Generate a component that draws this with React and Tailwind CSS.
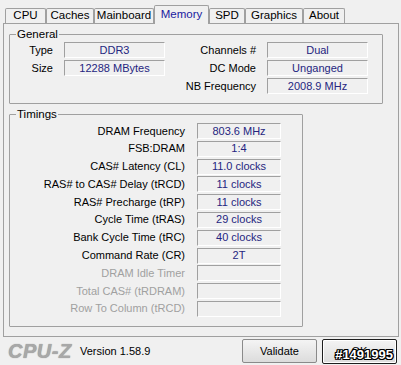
import React from "react";

const tabs = [
  { name: "CPU", w: "w-[41px]" },
  { name: "Caches", w: "w-[48px]" },
  { name: "Mainboard", w: "w-[60px]" },
  { name: "Memory", w: "w-[55px]", active: true },
  { name: "SPD", w: "w-[36px]" },
  { name: "Graphics", w: "w-[58px]" },
  { name: "About", w: "w-[42px]" },
];

const timings = [
  { label: "DRAM Frequency", value: "803.6 MHz" },
  { label: "FSB:DRAM", value: "1:4" },
  { label: "CAS# Latency (CL)", value: "11.0 clocks" },
  { label: "RAS# to CAS# Delay (tRCD)", value: "11 clocks" },
  { label: "RAS# Precharge (tRP)", value: "11 clocks" },
  { label: "Cycle Time (tRAS)", value: "29 clocks" },
  { label: "Bank Cycle Time (tRC)", value: "40 clocks" },
  { label: "Command Rate (CR)", value: "2T" },
  { label: "DRAM Idle Timer", value: "", disabled: true },
  { label: "Total CAS# (tRDRAM)", value: "", disabled: true },
  { label: "Row To Column (tRCD)", value: "", disabled: true },
];

// sunken read-only box like the win32 edit controls
const Field = ({ value, width, height = "h-[16px]" }) => (
  <div
    className={`${width} ${height} flex items-center justify-center border border-t-[#a0a0a0] border-l-[#a0a0a0] border-b-white border-r-white bg-[#f0f0f0] text-[#25257f] leading-none`}
  >
    {value}
  </div>
);

const Row = ({ label, value, labelW, fieldW }) => (
  <div className="flex items-center">
    <div className={`${labelW} text-right text-black leading-none`}>{label}</div>
    <div className="ml-[11px]">
      <Field value={value} width={fieldW} />
    </div>
  </div>
);

export default function App() {
  return (
    <div className="w-[401px] h-[365px] bg-[#f0f0f0] overflow-hidden font-['Liberation_Sans',Arial,sans-serif] text-[11px] text-black">
      {/* Tabs */}
      <div className="flex items-end h-[23px] pl-[5px]">
        {tabs.map((t) =>
          t.active ? (
            <div
              key={t.name}
              className={`${t.w} h-[19px] -mb-[1px] relative z-10 flex items-center justify-center bg-[#f0f0f0] border border-b-0 border-[#a0a0a0] rounded-t-[2px] text-[#1a1aa0] text-[11.5px]`}
            >
              {t.name}
            </div>
          ) : (
            <div
              key={t.name}
              className={`${t.w} h-[15px] flex items-center justify-center border border-b-0 border-[#a0a0a0] rounded-t-[2px] bg-[#f0f0f0] text-[11.5px]`}
            >
              {t.name}
            </div>
          )
        )}
      </div>

      {/* Tab panel */}
      <div className="ml-[3px] w-[396px] h-[314px] border border-[#a0a0a0]">
        {/* General */}
        <fieldset className="ml-[5px] mt-[4px] w-[374px] h-[76px] border border-[#a0a0a0] rounded-[1px]">
          <legend className="ml-[6px] px-[1px] leading-[13px] text-[11.5px]">General</legend>
          <div className="flex pt-[1px]">
            <div className="flex flex-col gap-[2px] w-[155px]">
              <Row label="Type" value="DDR3" labelW="w-[43px]" fieldW="w-[101px]" />
              <Row label="Size" value="12288 MBytes" labelW="w-[43px]" fieldW="w-[101px]" />
            </div>
            <div className="flex flex-col gap-[2px]">
              <Row label="Channels #" value="Dual" labelW="w-[91px]" fieldW="w-[101px]" />
              <Row label="DC Mode" value="Unganged" labelW="w-[91px]" fieldW="w-[101px]" />
              <Row label="NB Frequency" value="2008.9 MHz" labelW="w-[91px]" fieldW="w-[101px]" />
            </div>
          </div>
        </fieldset>

        {/* Timings */}
        <fieldset className="ml-[5px] mt-[4px] w-[294px] h-[219px] border border-[#a0a0a0] rounded-[1px]">
          <legend className="ml-[6px] px-[1px] leading-[13px] text-[11.5px]">Timings</legend>
          <div className="flex flex-col gap-[1.8px] pt-[2px]">
            {timings.map((t) => (
              <div key={t.label} className="flex items-center">
                <div
                  className={`w-[175px] text-right leading-none ${
                    t.disabled ? "text-[#a0a0a0]" : "text-black"
                  }`}
                >
                  {t.label}
                </div>
                <div className="ml-[12px]">
                  <Field value={t.value} width="w-[84px]" />
                </div>
              </div>
            ))}
          </div>
        </fieldset>
      </div>

      {/* Footer */}
      <div className="flex items-center h-[28px] pl-[8px]">
        <span className="w-[64px] text-[20px] font-bold italic text-[#a8a8a8] tracking-[0.5px] leading-none [text-shadow:0_0_1px_#8a8a8a]">
          CPU-Z
        </span>
        <span className="ml-[8px] text-[11px]">Version 1.58.9</span>
        <div className="ml-auto mr-[4px] flex gap-[5px] items-center">
          <button className="w-[75px] h-[24px] border border-[#8a8a8a] rounded-[2px] bg-gradient-to-b from-[#f4f4f4] to-[#dcdcdc] text-[11px]">
            Validate
          </button>
          <div className="relative">
            <button className="w-[75px] h-[25px] border border-[#1e1e1e] rounded-[2px] bg-gradient-to-b from-[#f4f4f4] to-[#dcdcdc] text-[11px] shadow-[inset_0_0_0_1px_#ffffff]">
              OK
            </button>
            <span className="absolute right-[4px] bottom-[3px] font-['Liberation_Sans',sans-serif] font-bold text-[13px] leading-none text-white [text-shadow:1px_0_0_#000,-1px_0_0_#000,0_1px_0_#000,0_-1px_0_#000,1px_1px_0_#000,-1px_-1px_0_#000,1px_-1px_0_#000,-1px_1px_0_#000]">
              #1491995
            </span>
          </div>
        </div>
      </div>
    </div>
  );
}
